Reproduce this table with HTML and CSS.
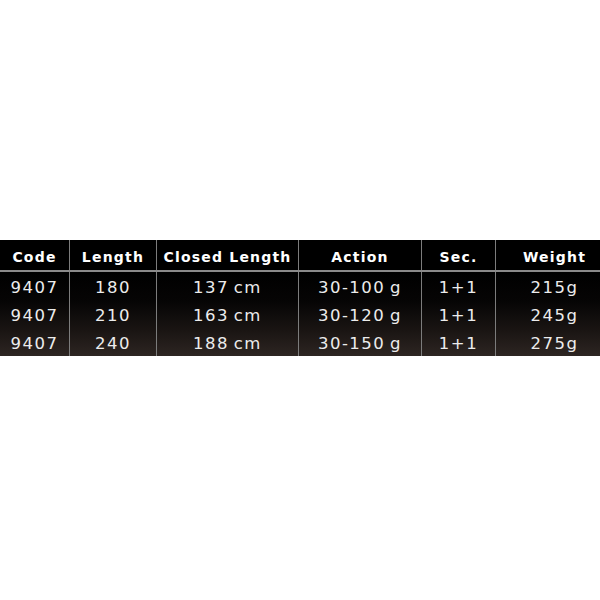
FILE: index.html
```html
<!DOCTYPE html>
<html>
<head>
<meta charset="utf-8">
<link rel="stylesheet" href="styles.css">
</head>
<body>
<div class="page">
  <div class="spec">
    <div class="row head">
      <div class="cell">Code</div>
      <div class="cell">Length</div>
      <div class="cell">Closed Length</div>
      <div class="cell">Action</div>
      <div class="cell">Sec.</div>
      <div class="cell last">Weight</div>
    </div>
    <div class="body">
      <div class="row">
        <div class="cell">9407</div>
        <div class="cell">180</div>
        <div class="cell">137 cm</div>
        <div class="cell">30-100 g</div>
        <div class="cell">1+1</div>
        <div class="cell last">215g</div>
      </div>
      <div class="row">
        <div class="cell">9407</div>
        <div class="cell">210</div>
        <div class="cell">163 cm</div>
        <div class="cell">30-120 g</div>
        <div class="cell">1+1</div>
        <div class="cell last">245g</div>
      </div>
      <div class="row">
        <div class="cell">9407</div>
        <div class="cell">240</div>
        <div class="cell">188 cm</div>
        <div class="cell">30-150 g</div>
        <div class="cell">1+1</div>
        <div class="cell last">275g</div>
      </div>
    </div>
  </div>
</div>
</body>
</html>
```
FILE: styles.css
```css
html, body {
  margin: 0;
  padding: 0;
  background: #ffffff;
}
.page {
  width: 600px;
  height: 600px;
  padding-top: 240px;
  box-sizing: border-box;
}
.spec {
  width: 600px;
}
.row {
  display: grid;
  grid-template-columns: 69px 87px 142px 123px 74px 1fr;
}
.cell {
  display: flex;
  align-items: center;
  justify-content: center;
  box-sizing: border-box;
  color: #ececec;
  font-family: "DejaVu Sans", sans-serif;
}
.cell + .cell {
  border-left: 1px solid #7c7c7c;
}
.cell.last {
  padding-left: 13px;
}
.head {
  background: #000000;
  height: 32px;
  border-bottom: 2px solid #8a8a8a;
  box-sizing: border-box;
}
.head .cell {
  color: #ffffff;
  font-weight: bold;
  font-size: 14px;
  letter-spacing: 1.2px;
  padding-top: 3px;
}
.head .cell.last {
  padding-left: 13px;
}
.body {
  background: linear-gradient(to bottom, #000000 0%, #060505 35%, #1a1513 70%, #2d2522 100%);
}
.body .row {
  height: 28px;
}
.body .cell {
  font-size: 16.5px;
  letter-spacing: 1.5px;
  word-spacing: -2px;
  padding-top: 2px;
}
```
